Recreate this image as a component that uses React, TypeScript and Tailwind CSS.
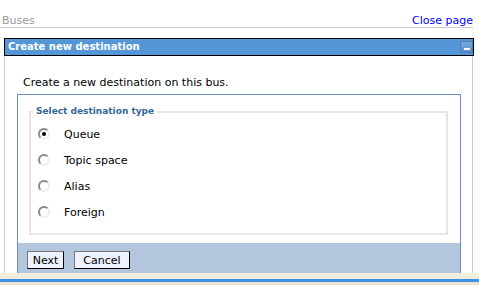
import React from 'react'

const font = "font-['DejaVu_Sans','Liberation_Sans',sans-serif]"

const options = ['Queue', 'Topic space', 'Alias', 'Foreign']

function Radio({ checked }: { checked: boolean }) {
  return (
    <span
      className="relative flex h-[12px] w-[12px] items-center justify-center rounded-full border-2 border-t-[#8a8a80] border-l-[#8a8a80] border-b-[#f0efe6] border-r-[#f0efe6] bg-white"
    >
      {checked && <span className="h-[4px] w-[4px] rounded-full bg-black" />}
    </span>
  )
}

export default function App() {
  return (
    <div className={`flex h-[289px] w-[479px] flex-col overflow-hidden bg-white text-black ${font}`}>
      <div className="h-[273px] overflow-hidden">
        {/* page header */}
        <div className="flex h-[28px] w-[473px] items-start justify-between border-b border-[#cccccc] pt-[15px] text-[11px] leading-[12px]">
          <span className="pl-[2px] text-[#999999]">Buses</span>
          <a className="text-[#0000ff]">Close page</a>
        </div>

        {/* portlet title */}
        <div className="ml-[4px] mt-[10px] flex h-[18px] w-[470px] items-center justify-between border border-black bg-[#5596d6] pl-[3px]">
          <span className="text-[10px] font-bold leading-[12px] text-white">Create new destination</span>
          <span className="flex h-[12px] w-[13px] items-end justify-center border border-[#4a7fb8] bg-gradient-to-b from-[#78a8dc] to-[#5a8cc8] pb-[2px]">
            <span className="h-[2px] w-[6px] bg-white" />
          </span>
        </div>

        <div className="ml-[4px] h-[230px] w-[469px] border-x border-[#cccccc] pt-[20px]">
          <p className="pl-[18px] text-[11px] leading-[13px]">Create a new destination on this bus.</p>

          <div className="ml-[12px] mt-[5px] h-[200px] w-[444px] border border-[#6b8fc2]">
            <fieldset className="ml-[11px] mt-[11px] w-[419px] border-2 border-[#e6e6e6] pb-[8px] pl-[2px]">
              <legend className="px-[3px] text-[9px] font-bold leading-[11px] text-[#336699]">
                Select destination type
              </legend>
              <div className="pt-[4px]">
                {options.map((label, i) => (
                  <div key={label} className="flex h-[26px] items-center">
                    <span className="ml-[5px]">
                      <Radio checked={i === 0} />
                    </span>
                    <span className="ml-[14px] text-[11px] leading-[13px]">{label}</span>
                  </div>
                ))}
              </div>
            </fieldset>

            <div className="mt-[8px] flex h-[30px] gap-[10px] bg-[#b4c5de] pl-[9px] pt-[8px]">
              <button className="h-[18px] w-[37px] border border-t-[#777] border-l-[#777] border-b-black border-r-black bg-[#eef2fe] text-[11px] leading-[13px]">
                Next
              </button>
              <button className="h-[18px] w-[56px] border border-t-[#777] border-l-[#777] border-b-black border-r-black bg-[#eef2fe] text-[11px] leading-[13px]">
                Cancel
              </button>
            </div>
          </div>
        </div>
      </div>

      {/* frame footer stripe */}
      <div className="flex flex-col">
        <div className="h-[6px] bg-[#f2eedc]" />
        <div className="h-[3px] bg-[#3d8ee6]" />
        <div className="h-[3px] bg-[#e8e4d0]" />
      </div>
    </div>
  )
}
